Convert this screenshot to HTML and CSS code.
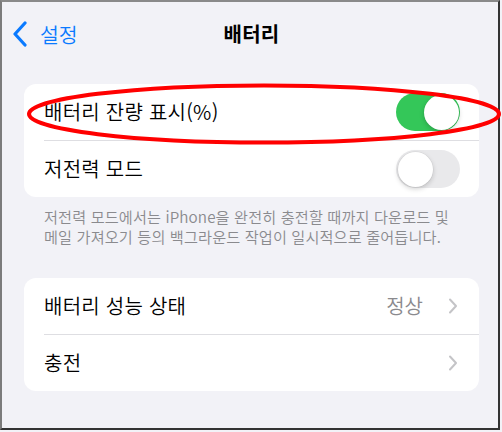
FILE: index.html
```html
<!DOCTYPE html>
<html lang="ko">
<head>
<meta charset="utf-8">
<link rel="stylesheet" href="styles.css">
</head>
<body>
<div class="frame">
  <div class="nav">
    <div class="back">
      <svg class="back-chev" width="16" height="26" viewBox="0 0 16 26"><path d="M13 2 L3 13 L13 24" fill="none" stroke="#0a7aff" stroke-width="3.2" stroke-linecap="round" stroke-linejoin="round"/></svg>
      <span>설정</span>
    </div>
    <div class="title">배터리</div>
  </div>

  <div class="card first">
    <div class="row">
      <span class="label">배터리 잔량 표시(%)</span>
      <span class="toggle on"><span class="knob"></span></span>
    </div>
    <div class="sep"></div>
    <div class="row">
      <span class="label">저전력 모드</span>
      <span class="toggle"><span class="knob"></span></span>
    </div>
  </div>
  <p class="footnote">저전력 모드에서는 iPhone을 완전히 충전할 때까지 다운로드 및<br>메일 가져오기 등의 백그라운드 작업이 일시적으로 줄어듭니다.</p>

  <div class="card second">
    <div class="row">
      <span class="label">배터리 성능 상태</span>
      <span class="value">정상</span>
      <svg class="chev" width="10" height="16" viewBox="0 0 10 16"><path d="M2 1.5 L8 8 L2 14.5" fill="none" stroke="#c4c4c7" stroke-width="2" stroke-linecap="round" stroke-linejoin="round"/></svg>
    </div>
    <div class="sep"></div>
    <div class="row">
      <span class="label">충전</span>
      <svg class="chev" width="10" height="16" viewBox="0 0 10 16"><path d="M2 1.5 L8 8 L2 14.5" fill="none" stroke="#c4c4c7" stroke-width="2" stroke-linecap="round" stroke-linejoin="round"/></svg>
    </div>
  </div>

  <svg class="mark" width="502" height="80" viewBox="0 0 502 80"><ellipse cx="264" cy="36" rx="235" ry="28.5" fill="none" stroke="#ff0000" stroke-width="4"/></svg>
</div>
</body>
</html>
```

FILE: styles.css
```css
* { box-sizing: border-box; }
html, body { margin: 0; padding: 0; background: #f2f2f7; }
body {
  width: 502px;
  height: 432px;
  font-family: "Noto Sans CJK KR", "Noto Sans", sans-serif;
  color: #000;
  overflow: hidden;
}
.frame {
  position: relative;
  width: 500px;
  height: 430px;
  background: #f2f2f7;
  border-left: 2px solid #7c7c7c;
  border-top: 2px solid #8a8a8a;
  border-right: 2px solid #333;
  border-bottom: 2px solid #333;
  padding: 0 19px 0 22px;
}
.nav {
  position: relative;
  height: 62px;
  display: flex;
  align-items: center;
  justify-content: center;
}
.back {
  position: absolute;
  left: -12px;
  top: 19px;
  display: flex;
  align-items: center;
  gap: 12px;
  color: #0a7aff;
  font-size: 20.5px;
  line-height: 26px;
  font-weight: 350;
}
.title {
  font-size: 20px;
  font-weight: 700;
  line-height: 26px;
  margin-top: 2px;
  letter-spacing: 0.3px;
}
.card {
  background: #fff;
  border-radius: 12px;
  overflow: hidden;
}
.card.first { margin-top: 20px; }
.row {
  height: 56px;
  display: flex;
  align-items: center;
  padding: 0 20px 0 20px;
}
.label {
  flex: 1;
  font-size: 20px;
  line-height: 26px;
  font-weight: 350;
  letter-spacing: 0.25px;
}
.sep {
  height: 1px;
  background: #dedee2;
  margin-left: 20px;
}
.toggle {
  width: 64px;
  height: 38px;
  border-radius: 19px;
  background: #e9e9eb;
  position: relative;
  margin-right: -1px;
}
.toggle .knob {
  position: absolute;
  top: 1.5px;
  left: 1.5px;
  width: 35px;
  height: 35px;
  border-radius: 50%;
  background: #fff;
  box-shadow: 0 2px 5px rgba(0,0,0,0.18), 0 0 0 0.5px rgba(0,0,0,0.06);
}
.toggle.on { background: #34c759; }
.toggle.on .knob { left: 27.5px; }
.value {
  color: #8a8a8e;
  font-size: 20px;
  line-height: 26px;
  font-weight: 350;
  margin-right: 25px;
}
.chev { margin-right: 1px; }
.footnote {
  margin: 0;
  padding: 9px 0 0 20px;
  font-size: 15.2px;
  line-height: 20px;
  font-weight: 350;
  color: #8a8a8e;
  letter-spacing: 0.12px;
}
.card.second { margin-top: 32px; }
.mark {
  position: absolute;
  left: -2px;
  top: 76px;
  pointer-events: none;
}
```
